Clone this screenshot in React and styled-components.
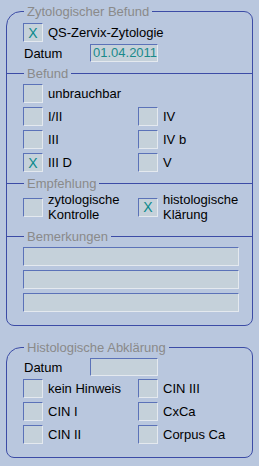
import styled, { createGlobalStyle } from 'styled-components'

const GlobalStyle = createGlobalStyle`
    html, body {
        margin: 0;
        padding: 0;
        background: #b9c7de;
    }
    body {
        width: 259px;
        height: 466px;
        overflow: hidden;
        font-family: "Liberation Sans", Arial, sans-serif;
        font-size: 13px;
        color: #000;
    }
`

const Pagina = styled.div`
    display: flex;
    flex-direction: column;
    padding-top: 4px;
`

const Gruppe = styled.fieldset`
    margin: ${props => props.$abstand || '0'} 6px 0;
    padding: 0;
    border: 1px solid #3c4ca6;
    border-radius: 15px 9px 8px 8px;
    min-inline-size: 0;
`

const Abschnitt = styled.fieldset`
    margin: 0;
    padding: ${props => props.$padding};
    border: none;
    border-top: 1px solid #3c4ca6;
    min-inline-size: 0;
`

const Legende = styled.legend`
    margin-left: 17px;
    padding: 0 3px;
    color: #8a8a8a;
    font-size: 13px;
    line-height: 15px;
`

const Inhalt = styled.div`
    display: flex;
    flex-direction: column;
    gap: ${props => props.$gap || '4px'};
    padding: ${props => props.$padding};
`

const Raster = styled.div`
    display: grid;
    grid-template-columns: 115px 1fr;
    row-gap: 4px;
    padding: 0 0 0 16px;
`

const Zeile = styled.div`
    display: flex;
    align-items: center;
    gap: 5px;
    height: ${props => props.$hoehe || '19px'};
    grid-column: ${props => props.$voll ? '1 / 3' : 'auto'};
`

const Kasten = styled.div`
    box-sizing: border-box;
    flex: none;
    width: 20px;
    height: 19px;
    background: #c5d1da;
    border-top: 1px solid #5b72b8;
    border-left: 1px solid #5b72b8;
    border-right: 1px solid #e4e9ef;
    border-bottom: 1px solid #e4e9ef;
    display: flex;
    align-items: center;
    justify-content: center;
    color: #0b8a8a;
    font-size: 14px;
    line-height: 1;
`

const Beschriftung = styled.span`
    line-height: 15px;
    white-space: nowrap;
`

const DatumZeile = styled.div`
    display: flex;
    align-items: center;
    height: 18px;
    padding-left: ${props => props.$einzug};
`

const DatumLabel = styled.span`
    width: 66px;
    flex: none;
`

const Feld = styled.div`
    box-sizing: border-box;
    width: ${props => props.$breite};
    height: ${props => props.$hoehe || '18px'};
    background: #c5d1da;
    border-top: 1px solid #5b72b8;
    border-left: 1px solid #5b72b8;
    border-right: 1px solid #e4e9ef;
    border-bottom: 1px solid #e4e9ef;
    color: #1a8a8a;
    padding-left: 2px;
    line-height: 16px;
`

function Auswahl({ text, an, hoehe, voll }) {
    return (
        <Zeile $hoehe={hoehe} $voll={voll}>
            <Kasten>{an ? 'X' : ''}</Kasten>
            <Beschriftung>{text}</Beschriftung>
        </Zeile>
    )
}

const befund = [
    { text: 'unbrauchbar', voll: true },
    { text: 'I/II' }, { text: 'IV' },
    { text: 'III' }, { text: 'IV b' },
    { text: 'III D', an: true }, { text: 'V' },
]

const histo = [
    { text: 'kein Hinweis' }, { text: 'CIN III' },
    { text: 'CIN I' }, { text: 'CxCa' },
    { text: 'CIN II' }, { text: 'Corpus Ca' },
]

export default function App() {
    return (
        <>
            <GlobalStyle />
            <Pagina>
                <Gruppe>
                    <Legende>Zytologischer Befund</Legende>
                    <Inhalt $gap="2px" $padding="4px 0 4px 16px">
                        <Auswahl text="QS-Zervix-Zytologie" an />
                        <DatumZeile $einzug="1px">
                            <DatumLabel>Datum</DatumLabel>
                            <Feld $breite="68px">01.04.2011</Feld>
                        </DatumZeile>
                    </Inhalt>

                    <Abschnitt $padding="3px 0 4px">
                        <Legende>Befund</Legende>
                        <Raster>
                            {befund.map(b => (
                                <Auswahl key={b.text} text={b.text} an={b.an} voll={b.voll} />
                            ))}
                        </Raster>
                    </Abschnitt>

                    <Abschnitt $padding="1px 0 7px">
                        <Legende>Empfehlung</Legende>
                        <Raster>
                            <Auswahl text={<>zytologische<br />Kontrolle</>} hoehe="30px" />
                            <Auswahl text={<>histologische<br />Klärung</>} hoehe="30px" an />
                        </Raster>
                    </Abschnitt>

                    <Abschnitt $padding="3px 0 13px">
                        <Legende>Bemerkungen</Legende>
                        <Inhalt $padding="0 0 0 16px">
                            <Feld $breite="216px" $hoehe="19px" />
                            <Feld $breite="216px" $hoehe="19px" />
                            <Feld $breite="216px" $hoehe="19px" />
                        </Inhalt>
                    </Abschnitt>
                </Gruppe>

                <Gruppe $abstand="14px">
                    <Legende>Histologische Abklärung</Legende>
                    <Inhalt $gap="3px" $padding="3px 0 13px">
                        <DatumZeile $einzug="17px">
                            <DatumLabel>Datum</DatumLabel>
                            <Feld $breite="68px" />
                        </DatumZeile>
                        <Raster>
                            {histo.map(h => (
                                <Auswahl key={h.text} text={h.text} />
                            ))}
                        </Raster>
                    </Inhalt>
                </Gruppe>
            </Pagina>
        </>
    )
}
